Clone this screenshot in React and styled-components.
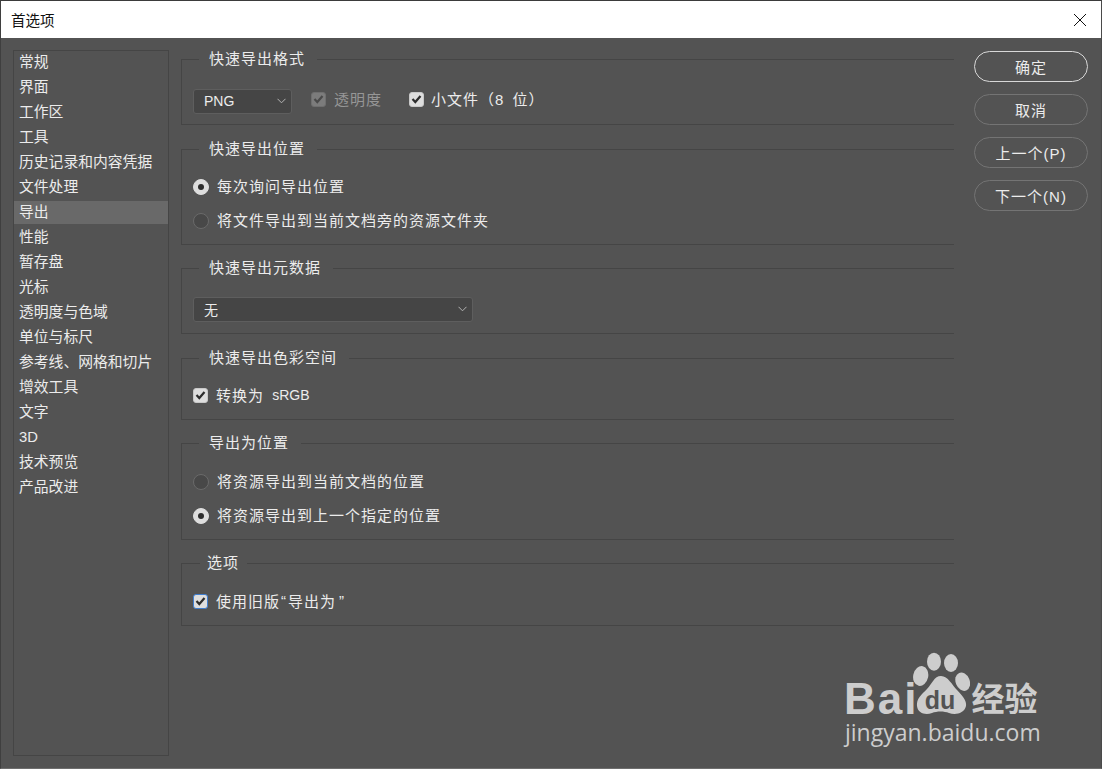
import React from 'react';
import styled, { createGlobalStyle } from 'styled-components';

const Global = createGlobalStyle`
  html, body { margin: 0; padding: 0; background: #535353; }
  body { font-family: "Liberation Sans", "Noto Sans CJK SC", sans-serif; }
`;

const Window = styled.div`
  position: relative;
  width: 1102px;
  height: 769px;
  box-sizing: border-box;
  overflow: hidden;
  background: #535353;
  border-top: 1px solid #3b3b3b;
  border-left: 1px solid #3f3f3f;
  border-right: 1px solid #4a4a4a;
  border-bottom: 1px solid #6e6e6e;
  display: flex;
  flex-direction: column;
`;

const TitleBar = styled.header`
  height: 37px;
  flex: none;
  background: #fff;
  display: flex;
  align-items: center;
  justify-content: space-between;
  padding: 0 14px 0 10px;
  font-size: 14.5px;
  color: #111;
`;

const CloseIcon = styled.svg`
  width: 14px;
  height: 14px;
  stroke: #111;
  stroke-width: 1;
  fill: none;
`;

const Body = styled.div`
  flex: 1;
  min-height: 0;
  display: flex;
  padding: 12px 13px 12px 12px;
`;

const Sidebar = styled.ul`
  width: 156px;
  box-sizing: border-box;
  flex: none;
  list-style: none;
  margin: 0;
  padding: 0;
  border: 1px solid #454545;
`;

const SideItem = styled.li`
  height: 25px;
  line-height: 22px;
  padding-left: 5px;
  font-size: 14.8px;
  color: #ececec;
  white-space: nowrap;
  background: ${p => (p.$active ? 'linear-gradient(#696969 0 23px, transparent 23px)' : 'transparent')};
`;

const Main = styled.main`
  width: 773px;
  flex: none;
  margin-left: 12px;
  padding-top: 9px;
`;

const Group = styled.section`
  height: ${p => p.$h}px;
  margin-bottom: ${p => p.$mb}px;
  box-sizing: border-box;
  border: 1px solid #454545;
  border-right: none;
  padding-left: 11px;
`;

const Legend = styled.h3`
  width: fit-content;
  margin: -11px 0 0 ${p => (p.$short ? 7 : 6)}px;
  padding: 0 ${p => (p.$short ? 8 : 12)}px 0 ${p => (p.$short ? 7 : 10)}px;
  height: 22px;
  line-height: 20px;
  background: #535353;
  font-size: 15px;
  font-weight: 400;
  letter-spacing: 1px;
  color: #ececec;
`;

const Row = styled.div`
  display: flex;
  align-items: center;
  height: ${p => p.$h || 34}px;
  margin-top: ${p => p.$mt || 0}px;
  font-size: 15px;
  letter-spacing: 1px;
  word-spacing: 3px;
  white-space: pre;
  color: ${p => (p.$dim ? '#969696' : '#ececec')};
`;

const Latin = styled.span`
  font-size: 14px;
  letter-spacing: 0;
`;

const Quote = styled.span`
  margin: 0 ${p => p.$right || 0}px 0 ${p => p.$left || 0}px;
`;

const Select = styled.div`
  width: ${p => p.$w}px;
  height: 25px;
  margin-top: 6px;
  box-sizing: border-box;
  flex: none;
  display: flex;
  align-items: center;
  justify-content: space-between;
  padding: 0 5px 1px 10px;
  background: #454545;
  border: 1px solid #5e5e5e;
  border-radius: 3px;
  font-size: 14px;
  letter-spacing: 0;
  color: #ececec;
`;

const Chevron = styled.svg`
  width: 9px;
  height: 6px;
  stroke: #b4b4b4;
  fill: none;
  stroke-width: 1;
`;

const CheckBox = styled.span`
  width: 15px;
  height: 15px;
  box-sizing: border-box;
  flex: none;
  margin-top: 1px;
  margin-left: ${p => p.$ml || 0}px;
  margin-right: ${p => p.$mr || 7}px;
  border-radius: 3px;
  display: flex;
  align-items: center;
  justify-content: center;
  background: ${p => (p.$dim ? '#7c7c7c' : '#dedede')};
  border: 1px solid ${p => (p.$focus ? '#3f7ed0' : p.$dim ? '#6f6f6f' : '#c8c8c8')};
`;

const CheckMark = styled.svg`
  width: 11px;
  height: 10px;
  fill: none;
  stroke: ${p => (p.$dim ? '#4a4a4a' : '#2d2d2d')};
  stroke-width: 2.2;
`;

const Radio = styled.span`
  width: 16px;
  height: 16px;
  box-sizing: border-box;
  flex: none;
  margin-top: 3px;
  margin-right: 8px;
  border-radius: 50%;
  display: flex;
  align-items: center;
  justify-content: center;
  background: ${p => (p.$on ? '#dedede' : '#484848')};
  border: 1px solid ${p => (p.$on ? '#dedede' : '#6a6a6a')};
  &::after {
    content: '';
    display: ${p => (p.$on ? 'block' : 'none')};
    width: 6px;
    height: 6px;
    border-radius: 50%;
    background: #2d2d2d;
  }
`;

const Actions = styled.div`
  width: 114px;
  flex: none;
  margin-top: 1px;
  margin-left: 20px;
  display: flex;
  flex-direction: column;
  gap: 12px;
`;

const Button = styled.button`
  height: 31px;
  box-sizing: border-box;
  padding: 0;
  border-radius: 16px;
  background: transparent;
  border: ${p => (p.$primary ? '1.5px solid #d8d8d8' : '1px solid #747474')};
  font: inherit;
  font-size: 15px;
  letter-spacing: 1px;
  color: #ececec;
`;

const Watermark = styled.div`
  position: absolute;
  left: 844px;
  top: 650px;
  width: 200px;
  color: #cdcdcd;
`;

const LogoRow = styled.div`
  display: flex;
  align-items: flex-end;
  height: 64px;
`;

const LogoWord = styled.span`
  font-family: "Liberation Sans", sans-serif;
  font-weight: 700;
  font-size: 44px;
  line-height: 34px;
  letter-spacing: 2px;
  margin: 0 0 -1px -1px;
`;

const Paw = styled.svg`
  width: 58px;
  height: 64px;
  flex: none;
  margin-left: -6px;
`;

const LogoCjk = styled.span`
  font-family: "Noto Sans CJK SC", sans-serif;
  font-weight: 700;
  font-size: 33px;
  line-height: 34px;
  margin: 0 0 1px 1px;
`;

const Domain = styled.div`
  font-family: "Open Sans", sans-serif;
  font-size: 23px;
  line-height: 24px;
  margin-top: 5px;
  white-space: nowrap;
`;

const sideItems = [
  '常规', '界面', '工作区', '工具', '历史记录和内容凭据', '文件处理', '导出', '性能', '暂存盘',
  '光标', '透明度与色域', '单位与标尺', '参考线、网格和切片', '增效工具', '文字', '3D', '技术预览', '产品改进',
];

const Check = ({ dim, focus, ml, mr }) => (
  <CheckBox $dim={dim} $focus={focus} $ml={ml} $mr={mr}>
    <CheckMark $dim={dim} viewBox="0 0 11 10"><path d="M1.5 5 L4.3 8 L9.5 2" /></CheckMark>
  </CheckBox>
);

const Arrow = () => (
  <Chevron viewBox="0 0 9 6"><path d="M0.5 0.8 L4.5 4.8 L8.5 0.8" /></Chevron>
);

export default function App() {
  return (
    <Window>
      <Global />
      <TitleBar>
        <span>首选项</span>
        <CloseIcon viewBox="0 0 14 14"><path d="M1 1 L13 13 M13 1 L1 13" /></CloseIcon>
      </TitleBar>
      <Body>
        <Sidebar>
          {sideItems.map(item => (
            <SideItem key={item} $active={item === '导出'}>{item}</SideItem>
          ))}
        </Sidebar>
        <Main>
          <Group $h={66} $mb={24}>
            <Legend>快速导出格式</Legend>
            <Row $h={25} $mt={15}>
              <Select $w={99}>PNG<Arrow /></Select>
              <Check dim ml={19} mr={8} />
              <Row as="span" $h={25} $dim>透明度</Row>
              <Check ml={27} mr={7} />
              小文件（8 位）
            </Row>
          </Group>
          <Group $h={96} $mb={23}>
            <Legend>快速导出位置</Legend>
            <Row $mt={7}><Radio $on />每次询问导出位置</Row>
            <Row><Radio />将文件导出到当前文档旁的资源文件夹</Row>
          </Group>
          <Group $h={66} $mb={24}>
            <Legend>快速导出元数据</Legend>
            <Row $h={25} $mt={14}>
              <Select $w={280}>无<Arrow /></Select>
            </Row>
          </Group>
          <Group $h={62} $mb={23}>
            <Legend>快速导出色彩空间</Legend>
            <Row $h={25} $mt={12}><Check mr={8} />转换为 <Latin>sRGB</Latin></Row>
          </Group>
          <Group $h={97} $mb={23}>
            <Legend>导出为位置</Legend>
            <Row $mt={8}><Radio />将资源导出到当前文档的位置</Row>
            <Row><Radio $on />将资源导出到上一个指定的位置</Row>
          </Group>
          <Group $h={63} $mb={0}>
            <Legend $short>选项</Legend>
            <Row $h={25} $mt={13}>
              <Check focus mr={8} />使用旧版<Quote $left={1} $right={1}>“</Quote>导出为<Quote $left={3}>”</Quote>
            </Row>
          </Group>
        </Main>
        <Actions>
          <Button $primary>确定</Button>
          <Button>取消</Button>
          <Button>上一个(P)</Button>
          <Button>下一个(N)</Button>
        </Actions>
      </Body>
      <Watermark>
        <LogoRow>
          <LogoWord>Bai</LogoWord>
          <Paw viewBox="0 0 58 64">
            <g fill="#cdcdcd">
              <ellipse cx="8.7" cy="25" rx="7.5" ry="10" transform="rotate(12 8.7 25)" />
              <ellipse cx="22" cy="10.7" rx="7" ry="9" />
              <ellipse cx="39" cy="12" rx="7" ry="9" />
              <ellipse cx="50.7" cy="30.7" rx="7" ry="9.5" transform="rotate(-22 50.7 30.7)" />
              <path d="M29 25 C36 25 40 34 45 39 C50 44 55 50 54 55 C52 63 43 64 37 62 C32 60 25 60 20 62 C14 64 6 63 5 55 C4 48 10 43 15 38 C20 33 22 25 29 25 Z" />
            </g>
            <text x="28" y="58" textAnchor="middle" fontFamily="Liberation Sans, sans-serif" fontWeight="700" fontSize="25" fill="#535353">du</text>
          </Paw>
          <LogoCjk>经验</LogoCjk>
        </LogoRow>
        <Domain>jingyan.baidu.com</Domain>
      </Watermark>
    </Window>
  );
}
